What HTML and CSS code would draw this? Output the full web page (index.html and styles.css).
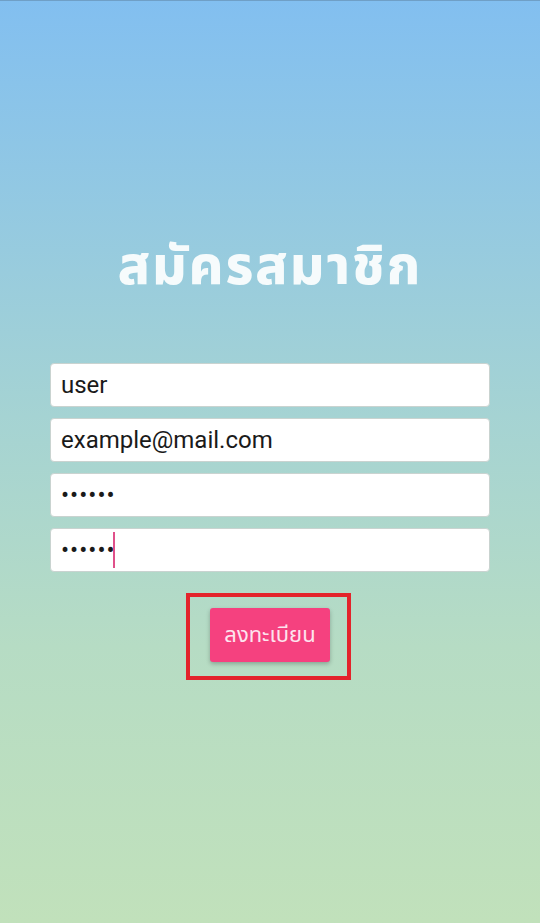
FILE: index.html
```html
<!DOCTYPE html>
<html lang="th">
<head>
<meta charset="utf-8">
<title>สมัครสมาชิก</title>
<link rel="stylesheet" href="styles.css">
</head>
<body>
<main class="screen">
  <h1 class="title">สมัครสมาชิก</h1>
  <form class="form">
    <input class="field" type="text" value="user">
    <input class="field" type="email" value="example@mail.com">
    <input class="field" type="password" value="123456">
    <div class="field field-active"><span class="dots">••••••</span><span class="caret"></span></div>
  </form>
  <div class="highlight">
    <button class="btn" type="button">ลงทะเบียน</button>
  </div>
</main>
</body>
</html>
```
FILE: styles.css
```css
html, body {
  margin: 0;
  padding: 0;
}
body {
  width: 540px;
  height: 923px;
  overflow: hidden;
  font-family: Roboto, "Noto Sans Thai", "Noto Sans", sans-serif;
  background: linear-gradient(180deg, #82bff0 0%, #a5d3d3 45%, #b6dcc4 70%, #c1e1bb 100%);
}
.screen {
  height: 923px;
  box-sizing: border-box;
  border-top: 1px solid #6f9fc6;
  display: flex;
  flex-direction: column;
  align-items: center;
  padding-top: 230px;
}
.title {
  margin: 0;
  font-family: "Noto Sans Thai", "Noto Sans", sans-serif;
  font-size: 53px;
  font-weight: 800;
  color: #f6fbfc;
  line-height: 74px;
  letter-spacing: 2px;
}
.form {
  margin-top: 58px;
  width: 440px;
  display: flex;
  flex-direction: column;
  gap: 11px;
}
.field {
  box-sizing: border-box;
  width: 440px;
  height: 44px;
  margin: 0;
  padding: 0 10px;
  border: 1px solid #c9d3d0;
  border-radius: 4px;
  background: #fff;
  font-family: Roboto, sans-serif;
  font-size: 24px;
  color: #1a1a1a;
  outline: none;
}
input[type="password"].field {
  letter-spacing: 1px;
}
.field-active {
  display: flex;
  align-items: center;
}
.dots {
  font-size: 24px;
  letter-spacing: 1px;
}
.caret {
  width: 2px;
  height: 36px;
  background: #e0508a;
  margin-left: -3px;
}
.highlight {
  margin-top: 21px;
  margin-right: 3px;
  border: 4px solid #e3232b;
  padding: 11px 17px 14px 20px;
}
.btn {
  display: block;
  width: 120px;
  height: 54px;
  border: none;
  border-radius: 3px;
  background: #f5417f;
  color: #fde4ee;
  font-family: "Noto Sans Thai", "Noto Sans", sans-serif;
  font-size: 22px;
  box-shadow: 0 2px 4px rgba(0, 0, 0, 0.25);
  padding: 0;
}
```
